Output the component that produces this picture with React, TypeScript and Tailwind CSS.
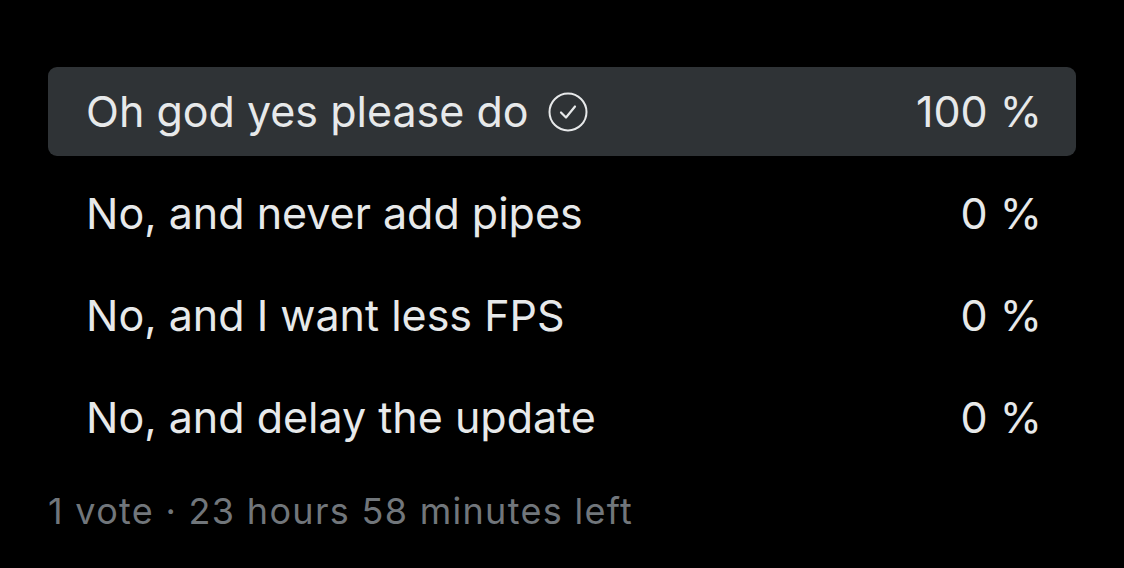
const options = [
  { label: "Oh god yes please do", percent: 100, chosen: true },
  { label: "No, and never add pipes", percent: 0, chosen: false },
  { label: "No, and I want less FPS", percent: 0, chosen: false },
  { label: "No, and delay the update", percent: 0, chosen: false },
];

const CheckCircle = () => (
  <svg width="40" height="40" viewBox="0 0 40 40" fill="none" className="ml-[19px] shrink-0">
    <circle cx="20" cy="20" r="18.5" stroke="#e7e9ea" strokeWidth="2" />
    <path d="M13 20.5l5 5 9-11" stroke="#e7e9ea" strokeWidth="2.2" strokeLinecap="round" strokeLinejoin="round" />
  </svg>
);

export default function App() {
  return (
    <div
      className="w-[1124px] h-[568px] bg-black px-12 pt-[67px] overflow-hidden"
      style={{ fontFamily: "Inter, 'Noto Sans', sans-serif" }}
    >
      <div className="flex flex-col gap-[13px]">
        {options.map((o) => (
          <div
            key={o.label}
            className={`h-[89px] rounded-[9px] flex items-center justify-between pl-[38px] pr-[34px] text-[43px] font-[370] tracking-[0px] leading-none text-[#e7e9ea] ${
              o.chosen ? "bg-[#2f3336]" : ""
            }`}
          >
            <div className="flex items-center">
              <span>{o.label}</span>
              {o.chosen && <CheckCircle />}
            </div>
            <span>{o.percent} %</span>
          </div>
        ))}
      </div>
      <div className="mt-[27px] text-[36px] font-[370] tracking-[1.3px] text-[#71767b] leading-[44px]">
        1 vote · 23 hours 58 minutes left
      </div>
    </div>
  );
}
